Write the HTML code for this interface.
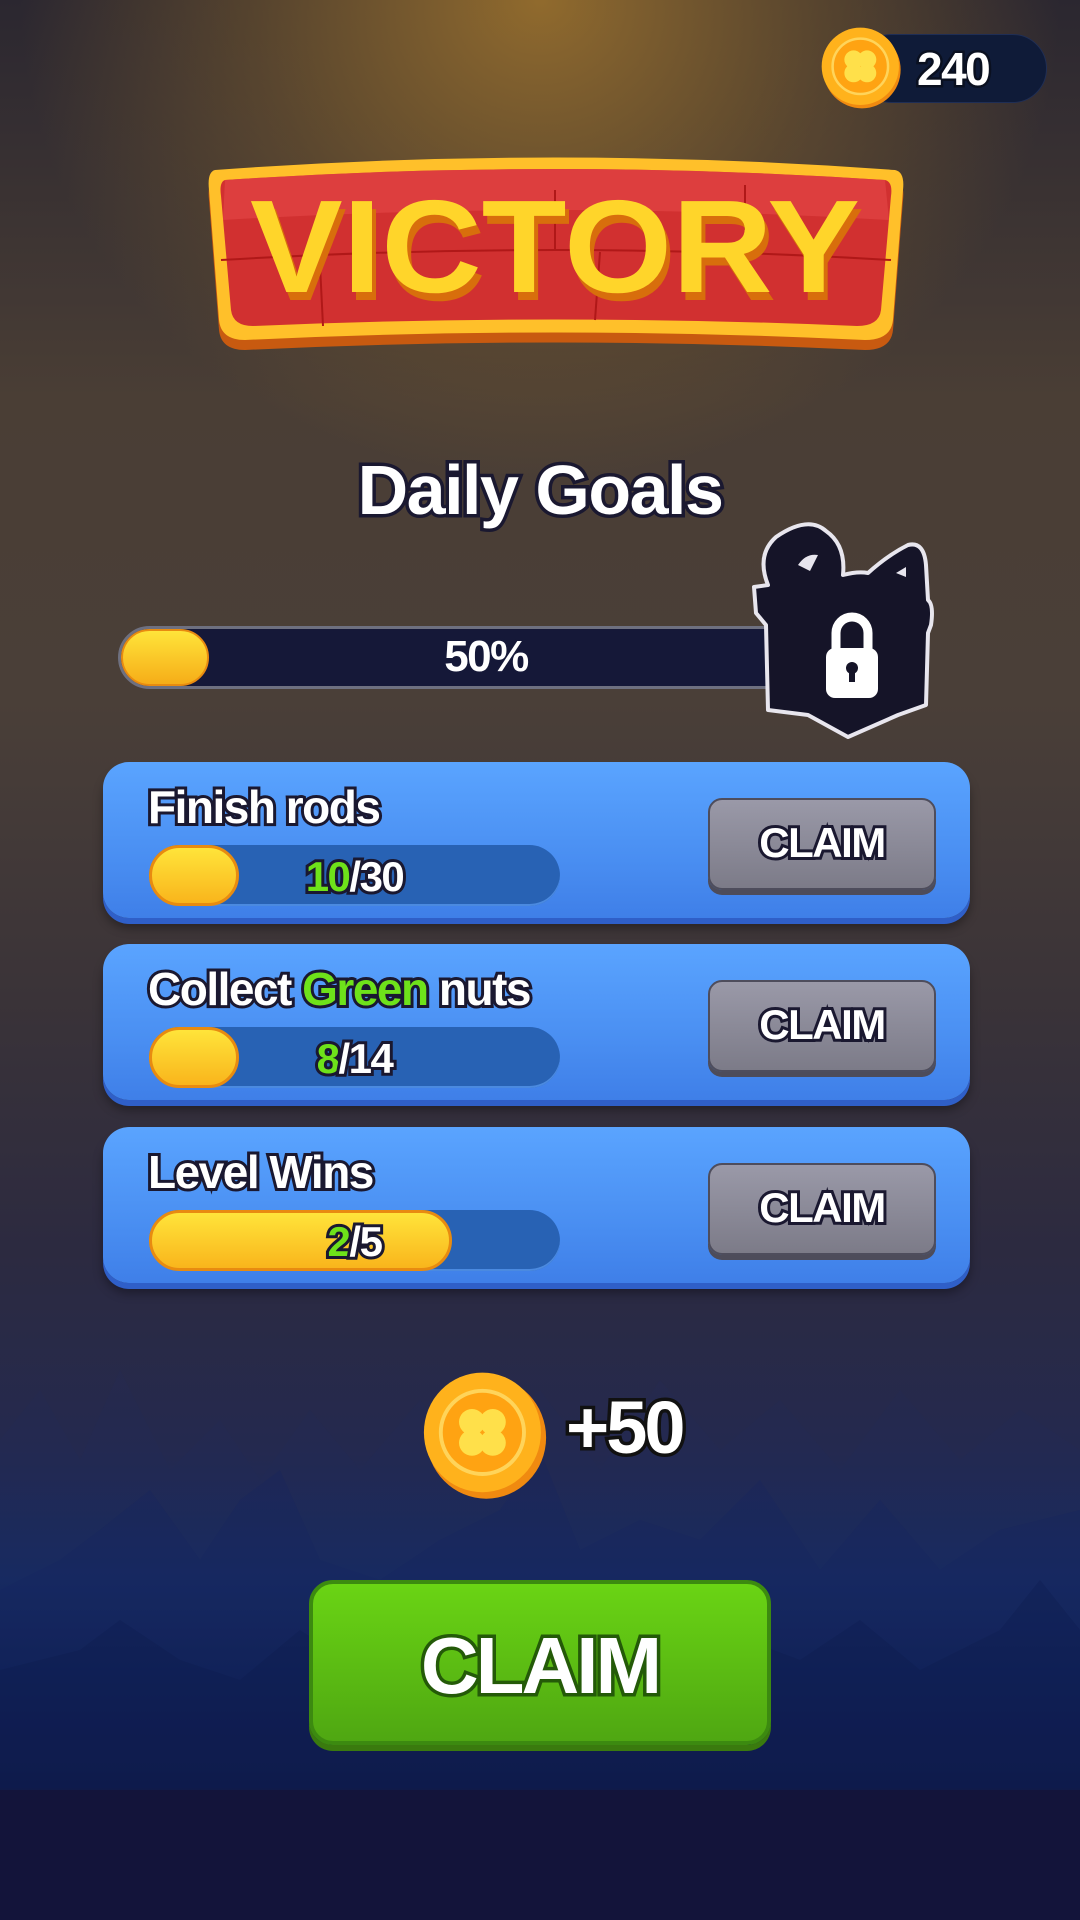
<!DOCTYPE html>
<html><head><meta charset="utf-8"><style>
*{margin:0;padding:0;box-sizing:border-box}
body{width:1080px;height:1920px;overflow:hidden;position:relative;font-family:"Liberation Sans",sans-serif;font-weight:bold;
background:
radial-gradient(ellipse 520px 480px at 540px 0px, rgba(150,110,45,0.95), rgba(120,90,45,0.55) 55%, rgba(0,0,0,0) 100%),
linear-gradient(180deg,#2b2730 0px,#4a3e35 400px,#4a3f38 700px,#3a3338 1000px,#2c2a40 1250px,#24294f 1450px,#162a62 1580px,#0e1f55 1680px,#0b1642 1788px,#13143a 1790px,#13143a 1920px);}
.t{color:#fff;paint-order:stroke fill;-webkit-text-stroke:6px #1a1830;letter-spacing:-1.5px}
.abs{position:absolute}
.card{position:absolute;left:103px;width:867px;height:156px;border-radius:26px;background:linear-gradient(180deg,#5aa4ff 0%,#4a8ff2 60%,#3f7fe8 100%);box-shadow:0 6px 0 #2f5fc8,0 10px 10px rgba(0,0,0,.35)}
.card .title{position:absolute;left:45px;top:18px;font-size:46px}
.bar{position:absolute;left:46px;top:83px;width:411px;height:61px;border-radius:31px;background:#2862b4;box-shadow:inset 0 -2px 0 #4b8ae0}
.fill{position:absolute;left:0;top:0;height:61px;border-radius:31px;background:linear-gradient(180deg,#ffe43a,#f9b51c);border:3px solid #e88b10}
.bar .num{position:absolute;left:0;width:100%;text-align:center;top:8px;font-size:42px}
.g{color:#6ee21a}
.btn{position:absolute;left:605px;top:36px;width:228px;height:92px;border-radius:14px;background:linear-gradient(180deg,#9a99a8,#7c7b88);border:2px solid #4e4d5c;box-shadow:0 5px 0 #4d4c5a;text-align:center;line-height:86px;font-size:42px}
</style></head><body>

<!-- mountains -->
<svg class="abs" style="left:0;top:1330px" width="1080" height="460">
<path d="M0 110 L40 60 L80 130 L120 40 L170 140 L220 90 L260 150 L310 80 L360 140 L420 70 L470 130 L540 60 L600 140 L660 50 L720 120 L780 70 L840 140 L900 60 L960 130 L1020 80 L1080 120 L1080 460 L0 460Z" fill="#1f2c5c" opacity=".15"/>
<path d="M0 260 L60 230 L100 200 L150 160 L200 230 L240 170 L280 140 L320 230 L380 250 L440 210 L500 180 L540 120 L580 220 L640 190 L700 210 L760 150 L820 240 L880 170 L940 240 L1000 200 L1080 180 L1080 460 L0 460Z" fill="#13255e" opacity=".25"/>
<path d="M0 340 L80 320 L120 290 L180 330 L240 350 L300 300 L360 340 L420 330 L480 360 L560 320 L640 340 L720 300 L800 330 L860 290 L920 340 L1000 300 L1040 250 L1080 300 L1080 460 L0 460Z" fill="#0c1b4d" opacity=".3"/>
</svg>

<!-- coin badge -->
<div class="abs" style="left:857px;top:34px;width:190px;height:69px;border-radius:35px;background:#0f1b38;border:1px solid #1f2e55"></div>
<svg class="abs" style="left:820px;top:26px" width="84" height="84" viewBox="0 0 100 100">
<circle cx="50" cy="52" r="46" fill="#f08a10"/><circle cx="48" cy="48" r="46" fill="#ffb21c"/><circle cx="48" cy="48" r="33" fill="#ffa312" stroke="#ffd45a" stroke-width="3"/>
<g fill="#ffe04a"><circle cx="40" cy="40" r="11"/><circle cx="56" cy="40" r="11"/><circle cx="40" cy="56" r="11"/><circle cx="56" cy="56" r="11"/></g>
</svg>
<div class="abs t" style="left:917px;top:42px;font-size:46px;-webkit-text-stroke:5px #0a1020">240</div>

<!-- victory banner -->
<svg class="abs" style="left:205px;top:150px" width="700" height="205" viewBox="0 0 700 205">
<path d="M10 20 Q350 -5 690 20 Q700 22 698 40 L688 170 Q686 190 660 190 Q350 175 40 190 Q16 190 14 170 L4 40 Q2 22 10 20Z" fill="#c85a10" transform="translate(0,10)"/>
<path d="M10 20 Q350 -5 690 20 Q700 22 698 40 L688 170 Q686 190 660 190 Q350 175 40 190 Q16 190 14 170 L4 40 Q2 22 10 20Z" fill="#ffc02a"/>
<path d="M20 30 Q350 8 680 30 Q688 32 686 46 L676 160 Q674 176 652 176 Q350 163 48 176 Q28 176 26 160 L16 46 Q14 32 20 30Z" fill="#d13030"/>
<path d="M20 30 Q350 8 680 30 L684 70 Q350 50 18 70Z" fill="#e24545" opacity=".7"/>
<g stroke="#b01818" stroke-width="2" fill="none"><path d="M16 110 Q350 90 686 110"/><path d="M115 115 L118 176"/><path d="M350 40 L350 100"/><path d="M395 102 L390 170"/><path d="M540 35 L540 80"/></g>
<text x="350" y="142" text-anchor="middle" font-family="Liberation Sans" font-weight="bold" font-size="132" textLength="610" lengthAdjust="spacingAndGlyphs" fill="#d86e0c" transform="translate(4,8)">VICTORY</text>
<text x="350" y="142" text-anchor="middle" font-family="Liberation Sans" font-weight="bold" font-size="132" textLength="610" lengthAdjust="spacingAndGlyphs" fill="#ffd52a">VICTORY</text>
</svg>

<!-- daily goals -->
<div class="abs t" style="left:0;width:1080px;text-align:center;top:450px;font-size:70px;-webkit-text-stroke:7px #1a1830">Daily Goals</div>

<!-- main progress -->
<div class="abs" style="left:118px;top:626px;width:680px;height:63px;border-radius:32px;background:#151838;border:3px solid #6e7080"></div>
<div class="abs" style="left:121px;top:629px;width:88px;height:57px;border-radius:29px;background:linear-gradient(180deg,#ffe43a,#f6ad18);border:2px solid #e88b10"></div>
<div class="abs t" style="left:118px;width:736px;text-align:center;top:632px;font-size:44px;-webkit-text-stroke:5px #151838">50%</div>

<!-- gift lock -->
<svg class="abs" style="left:748px;top:515px" width="210" height="225" viewBox="0 0 210 225">
<path d="M20 70 Q8 40 28 22 Q60 0 78 16 Q98 30 95 60 Q110 56 120 58 Q140 40 160 30 Q176 26 178 50 L180 85 Q186 90 183 110 L180 118 L178 190 L150 200 L100 222 L60 200 L20 195 L18 110 L8 98 L6 72Z" fill="#151428" stroke="#e8e6ee" stroke-width="4" stroke-linejoin="round"/>
<path d="M50 50 Q58 38 70 40 L62 56Z" fill="#e8e6ee"/><path d="M148 58 L158 52 L158 62Z" fill="#e8e6ee"/>
<rect x="78" y="133" width="52" height="50" rx="9" fill="#fff"/>
<path d="M88 135 V118 A16 16 0 0 1 120 118 V135" stroke="#fff" stroke-width="9" fill="none"/>
<circle cx="104" cy="153" r="6" fill="#151428"/><rect x="101" y="155" width="6" height="12" fill="#151428"/>
</svg>

<!-- cards -->
<div class="card" style="top:762px">
<div class="title t">Finish rods</div>
<div class="bar"><div class="fill" style="width:90px"></div><div class="num t"><span class="g">10</span>/30</div></div>
<div class="btn t">CLAIM</div>
</div>
<div class="card" style="top:944px">
<div class="title t">Collect <span class="g">Green</span> nuts</div>
<div class="bar"><div class="fill" style="width:90px"></div><div class="num t"><span class="g">8</span>/14</div></div>
<div class="btn t">CLAIM</div>
</div>
<div class="card" style="top:1127px">
<div class="title t">Level Wins</div>
<div class="bar"><div class="fill" style="width:303px"></div><div class="num t"><span class="g">2</span>/5</div></div>
<div class="btn t">CLAIM</div>
</div>

<!-- reward -->
<svg class="abs" style="left:420px;top:1370px" width="130" height="130" viewBox="0 0 100 100">
<ellipse cx="51" cy="52" rx="46" ry="47" fill="#f08a10"/><ellipse cx="48" cy="48" rx="45" ry="46" fill="#ffb21c"/><circle cx="48" cy="48" r="32" fill="#ffa312" stroke="#ffd45a" stroke-width="3"/>
<g fill="#ffe04a"><circle cx="40" cy="40" r="10"/><circle cx="56" cy="40" r="10"/><circle cx="40" cy="56" r="10"/><circle cx="56" cy="56" r="10"/></g>
</svg>
<div class="abs t" style="left:566px;top:1385px;font-size:74px;-webkit-text-stroke:7px #111;letter-spacing:-3px">+50</div>

<!-- green claim -->
<div class="abs" style="left:309px;top:1580px;width:462px;height:165px;border-radius:24px;background:linear-gradient(180deg,#6ad414,#4fa712);border:4px solid #3c8a10;box-shadow:0 6px 0 #3a7a0e"></div>
<div class="abs t" style="left:309px;width:462px;text-align:center;top:1620px;font-size:80px;-webkit-text-stroke:7px #245a08;letter-spacing:-3px">CLAIM</div>
</body></html>
